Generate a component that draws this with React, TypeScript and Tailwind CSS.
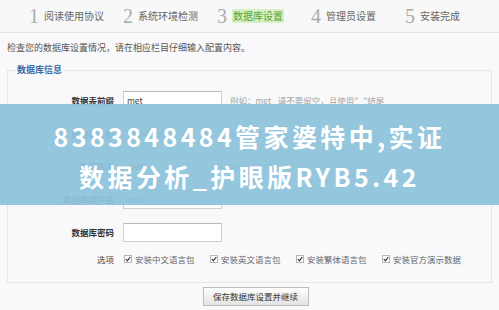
import React from "react";

const cjk = { fontFamily: '"Noto Sans CJK SC", "Noto Sans", sans-serif' };

const steps = [
  { n: "1", t: "阅读使用协议" },
  { n: "2", t: "系统环境检测" },
  { n: "3", t: "数据库设置", active: true },
  { n: "4", t: "管理员设置" },
  { n: "5", t: "安装完成" },
];

const rows = [
  { label: "数据表前缀", value: "met_", hint: "例如：met_ 请不要留空，且使用\"_\"结尾" },
  { label: "数据库主机", value: "localhost", hint: "数据库地址，一般为localhost" },
  { label: "数据库名", value: "met", hint: "数据库名称" },
  { label: "数据库用户名", value: "root", hint: "" },
  { label: "数据库密码", value: "", hint: "" },
];

const opts = ["安装中文语言包", "安装英文语言包", "安装繁体语言包", "安装官方演示数据"];

function Check() {
  return (
    <span className="inline-flex h-[8px] w-[8px] items-center justify-center border border-[#b5b5b5] bg-white">
      <svg width="6" height="6" viewBox="0 0 6 6">
        <path d="M0.8 3.2 L2.4 4.8 L5.3 1" stroke="#333" strokeWidth="1.2" fill="none" />
      </svg>
    </span>
  );
}

export default function App() {
  return (
    <div className="relative h-[310px] w-[499px] overflow-hidden bg-[#f9f9fb]" style={cjk}>
      <div className="flex h-[33px] items-center border-b border-[#e3e3e3] bg-[#f8f8f8] pl-[29px]">
        {steps.map((s) => (
          <div key={s.n} className="flex w-[97.5px] items-center gap-[5px]">
            <span
              className="text-[20px] leading-none text-[#ababab]"
              style={{ fontFamily: '"Liberation Serif", serif' }}
            >
              {s.n}
            </span>
            <span
              className={
                s.active
                  ? "bg-[#d6efc4] px-[1px] text-[10px] leading-[14px] text-[#56a537]"
                  : "text-[10px] leading-[14px] text-[#666]"
              }
            >
              {s.t}
            </span>
          </div>
        ))}
      </div>

      <p className="pl-[7px] pt-[9px] text-[9px] leading-[12px] text-[#555]">
        检查您的数据库设置情况，请在相应栏目仔细输入配置内容。
      </p>

      <div className="relative mx-[7px] mt-[16px] border border-[#e6e6e6] pb-[13px] pt-[13px]">
        <span className="absolute left-[8px] top-[-7px] bg-[#f9f9fb] px-[1px] text-[9px] font-bold leading-[12px] text-[#3c69a6]">
          数据库信息
        </span>
        {rows.map((r) => (
          <div key={r.label} className="flex h-[33px] items-center">
            <span className="w-[106px] text-right text-[8.5px] font-bold text-[#333]">{r.label}</span>
            <div className="ml-[9px] flex h-[19px] w-[99px] items-center border border-[#cfcfcf] border-t-[#b8b8b8] bg-white pl-[3px] text-[8.5px] text-[#444]">
              {r.value}
            </div>
            <span className="ml-[8px] text-[8.5px] text-[#a5a5a5]">{r.hint}</span>
          </div>
        ))}
        <div className="flex h-[20px] items-center">
          <span className="w-[106px] text-right text-[8.5px] text-[#444]">选项</span>
          <div className="ml-[10px] flex items-center">
            {opts.map((o) => (
              <div key={o} className="flex w-[86px] items-center gap-[3px]">
                <Check />
                <span className="text-[8.5px] text-[#666]">{o}</span>
              </div>
            ))}
          </div>
        </div>
      </div>

      <div className="mt-[4px] flex justify-center">
        <div className="ml-[12px] flex h-[19px] w-[106px] items-center justify-center border border-[#bdbdbd] bg-gradient-to-b from-[#fdfdfd] to-[#e4e4e4] text-[8.5px] text-[#333]">
          保存数据库设置并继续
        </div>
      </div>

      <div className="absolute left-0 right-0 top-[104px] flex h-[101px] flex-col items-center justify-center bg-[#8ec3db]/[0.95] pt-[2px] text-[25px] font-bold leading-[40px] tracking-[3.4px] text-white">
        <div>8383848484管家婆特中,实证</div>
        <div>数据分析_护眼版RYB5.42</div>
      </div>
    </div>
  );
}
